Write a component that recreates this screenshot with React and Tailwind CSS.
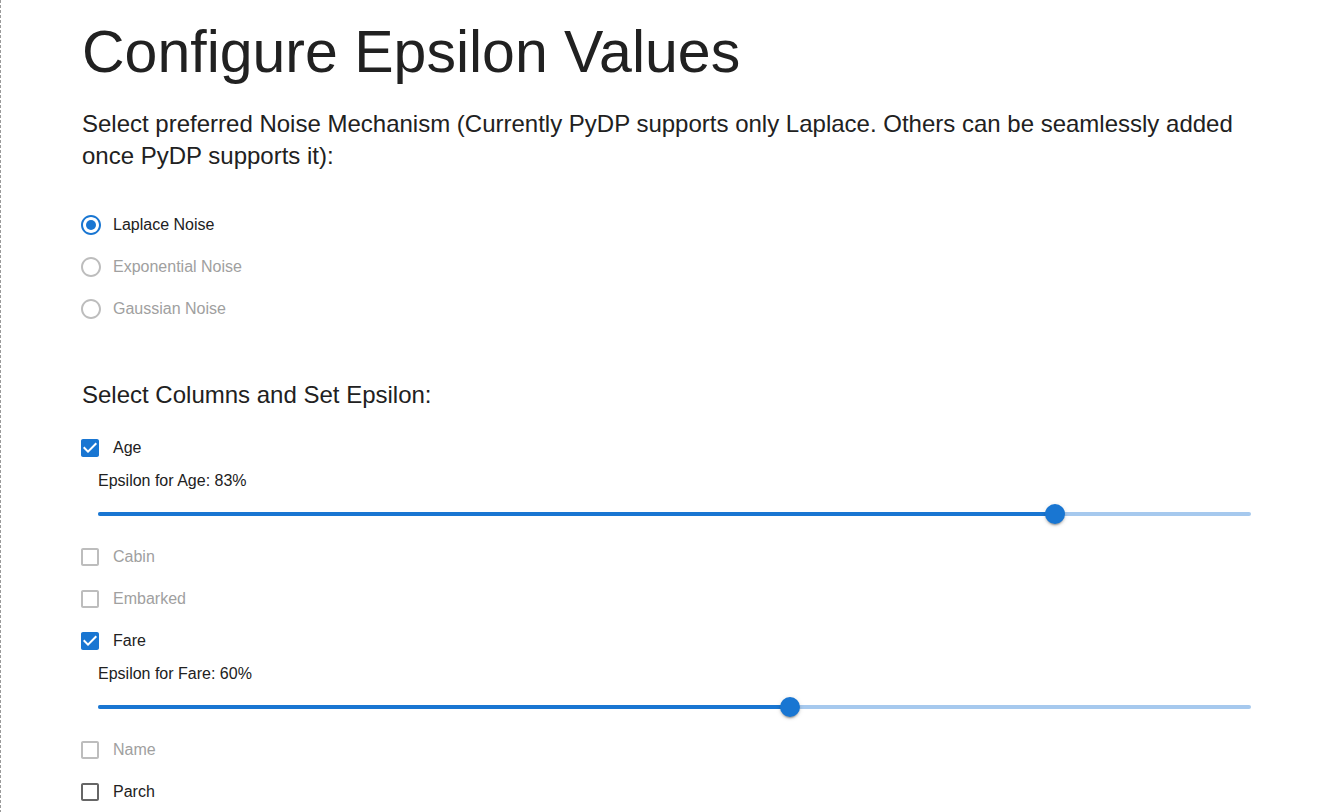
import React from 'react';

const noiseOptions = [
  { label: 'Laplace Noise', checked: true, disabled: false },
  { label: 'Exponential Noise', checked: false, disabled: true },
  { label: 'Gaussian Noise', checked: false, disabled: true },
];

const columns = [
  { name: 'Age', checked: true, disabled: false, epsilon: 83 },
  { name: 'Cabin', checked: false, disabled: true },
  { name: 'Embarked', checked: false, disabled: true },
  { name: 'Fare', checked: true, disabled: false, epsilon: 60 },
  { name: 'Name', checked: false, disabled: true },
  { name: 'Parch', checked: false, disabled: false },
];

// material icon paths
const RADIO_OFF = 'M12 2C6.48 2 2 6.48 2 12s4.48 10 10 10 10-4.48 10-10S17.52 2 12 2zm0 18c-4.42 0-8-3.58-8-8s3.58-8 8-8 8 3.58 8 8-3.58 8-8 8z';
const BOX_ON = 'M19 3H5c-1.11 0-2 .9-2 2v14c0 1.1.89 2 2 2h14c1.11 0 2-.9 2-2V5c0-1.1-.89-2-2-2zm-9 14l-5-5 1.41-1.41L10 14.17l7.59-7.59L19 8l-9 9z';
const BOX_OFF = 'M19 5v14H5V5h14m0-2H5c-1.1 0-2 .9-2 2v14c0 1.1.9 2 2 2h14c1.1 0 2-.9 2-2V5c0-1.1-.9-2-2-2z';

function iconColor(checked, disabled) {
  if (checked) return '#1976d2';
  return disabled ? '#bdbdbd' : '#666666';
}

function Radio({ checked, disabled }) {
  return (
    <svg viewBox="0 0 24 24" className="w-6 h-6 shrink-0" fill={iconColor(checked, disabled)}>
      <path d={RADIO_OFF} />
      {checked && <circle cx="12" cy="12" r="5" />}
    </svg>
  );
}

function Checkbox({ checked, disabled }) {
  return (
    <svg viewBox="0 0 24 24" className="w-6 h-6 shrink-0" fill={iconColor(checked, disabled)}>
      <path d={checked ? BOX_ON : BOX_OFF} />
    </svg>
  );
}

function Slider({ value }) {
  return (
    <div className="ml-4 mt-[11px] mb-[10px] h-6 relative flex items-center">
      <div className="w-full h-1 rounded-full bg-[#a6c9ee]" />
      <div className="absolute left-0 h-1 rounded-full bg-[#1976d2]" style={{ width: `${value}%` }} />
      <div
        className="absolute w-5 h-5 -ml-[10px] rounded-full bg-[#1976d2] shadow-[0_3px_1px_-2px_rgba(0,0,0,0.2),0_2px_2px_0_rgba(0,0,0,0.14),0_1px_5px_0_rgba(0,0,0,0.12)]"
        style={{ left: `${value}%` }}
      />
    </div>
  );
}

export default function App() {
  return (
    <div className="min-h-screen bg-white border-l border-dashed border-[#9a9a9a] font-['Liberation_Sans',Arial,sans-serif] text-[#212121]">
      <div className="pl-[81px] pr-[80px] pt-4">
        <h1 className="text-[59px] leading-[72px] font-normal">Configure Epsilon Values</h1>

        <p className="mt-5 text-2xl leading-8">
          Select preferred Noise Mechanism (Currently PyDP supports only Laplace. Others can be seamlessly added once
          PyDP supports it):
        </p>

        <div className="mt-8 flex flex-col">
          {noiseOptions.map(o => (
            <label key={o.label} className="h-[42px] flex items-center -ml-[3px]">
              <Radio checked={o.checked} disabled={o.disabled} />
              <span className={o.disabled ? 'ml-[10px] text-base text-[#a0a0a0]' : 'ml-[10px] text-base text-[#212121]'}>
                {o.label}
              </span>
            </label>
          ))}
        </div>

        <h6 className="mt-[49px] text-2xl leading-8">Select Columns and Set Epsilon:</h6>

        <div className="mt-4 flex flex-col">
          {columns.map(c => (
            <div key={c.name}>
              <label className="h-[42px] flex items-center -ml-[4px]">
                <Checkbox checked={c.checked} disabled={c.disabled} />
                <span className={c.disabled ? 'ml-[11px] text-base text-[#a0a0a0]' : 'ml-[11px] text-base text-[#212121]'}>
                  {c.name}
                </span>
              </label>
              {c.checked && (
                <>
                  <div className="mt-[2px] pl-4 text-base leading-5">
                    Epsilon for {c.name}: {c.epsilon}%
                  </div>
                  <Slider value={c.epsilon} />
                </>
              )}
            </div>
          ))}
        </div>
      </div>
    </div>
  );
}
